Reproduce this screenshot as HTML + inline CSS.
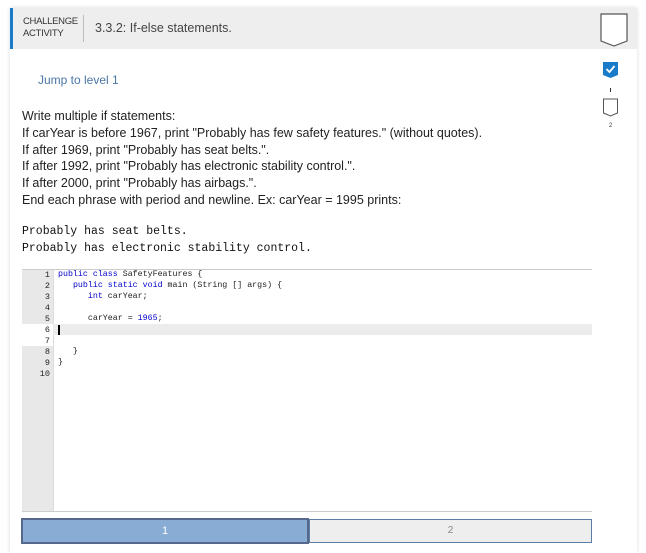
<!DOCTYPE html>
<html><head><style>
body{margin:0;width:646px;height:549px;background:#fff;font-family:"Liberation Sans",sans-serif;position:relative;overflow:hidden}
.card{position:absolute;left:10px;top:8px;width:627px;height:545px;background:#fff;box-shadow:0 0 4px rgba(0,0,0,.15)}
.hdr{position:absolute;left:0;top:0;width:627px;height:41px;background:#eee;border-left:3px solid #1a7bc9;box-sizing:border-box}
.ca{position:absolute;left:10px;top:8px;font-size:9.5px;line-height:12px;color:#333;letter-spacing:-.3px}
.sep{position:absolute;left:70px;top:7px;width:1px;height:27px;background:#bbb}
.title{position:absolute;left:82px;top:13px;font-size:12.5px;color:#444}
.jump{position:absolute;left:38px;top:73px;font-size:12px;color:#4a76a8}
.txt{position:absolute;left:22px;top:108px;font-size:12.5px;line-height:16.8px;color:#222}
.out{position:absolute;left:22px;top:223px;font-family:"Liberation Mono",monospace;font-size:11.5px;line-height:17px;color:#111;margin:0}
.ed{position:absolute;left:22px;top:269px;width:570px;height:241px;border-top:1px solid #ccc;border-bottom:1px solid #ccc}
.gut{position:absolute;left:0;top:0;width:31px;height:241px;background:#e8e8e8;border-right:1px solid #ddd}
.ln{position:absolute;left:0;width:28px;text-align:right;font-family:"Liberation Mono",monospace;font-size:8.5px;color:#222}
.cl{position:absolute;left:36px;font-family:"Liberation Mono",monospace;font-size:8.3px;color:#222;white-space:pre}
.k{color:#00c}.n{color:#00c}
.bar{position:absolute;top:518px;height:26px;box-sizing:border-box;font-size:10px;text-align:center;line-height:22px}
</style></head><body>
<div class="card">
<div class="hdr"><div class="ca">CHALLENGE<br>ACTIVITY</div><div class="sep"></div><div class="title">3.3.2: If-else statements.</div></div>
<svg style="position:absolute;left:590px;top:5px" width="28" height="34"><path d="M1 1H27V28L14 33L1 28Z" fill="#fff" stroke="#555" stroke-width="1.2"/></svg>
<svg style="position:absolute;left:592px;top:53px" width="18" height="80"><path d="M1 1H16V14L8.5 17L1 14Z" fill="#1a7bc9"/><path d="M4.5 8L7.5 11L12.5 5" fill="none" stroke="#fff" stroke-width="1.8"/><line x1="8.5" y1="27" x2="8.5" y2="31" stroke="#333"/><path d="M1.5 38H15.5V52L8.5 55L1.5 52Z" fill="#fff" stroke="#555"/><text x="8.5" y="66" font-size="6" text-anchor="middle" fill="#333">2</text></svg>
</div>
<div class="jump">Jump to level 1</div>
<div class="txt">Write multiple if statements:<br>If carYear is before 1967, print "Probably has few safety features." (without quotes).<br>If after 1969, print "Probably has seat belts.".<br>If after 1992, print "Probably has electronic stability control.".<br>If after 2000, print "Probably has airbags.".<br>End each phrase with period and newline. Ex: carYear = 1995 prints:</div>
<pre class="out">Probably has seat belts.
Probably has electronic stability control.</pre>
<div class="ed"><div class="gut"></div>
<div style="position:absolute;left:0;top:54px;width:570px;height:11px;background:#ececec"></div>
<div style="position:absolute;left:0;top:54px;width:31px;height:22px;background:#fff"></div>
<div class="ln" style="top:0">1</div><div class="ln" style="top:11px">2</div><div class="ln" style="top:22px">3</div><div class="ln" style="top:33px">4</div><div class="ln" style="top:44px">5</div><div class="ln" style="top:55px">6</div><div class="ln" style="top:66px">7</div><div class="ln" style="top:77px">8</div><div class="ln" style="top:88px">9</div><div class="ln" style="top:99px">10</div>
<div class="cl" style="top:0"><span class="k">public class</span> SafetyFeatures {</div>
<div class="cl" style="top:11px">   <span class="k">public static void</span> main (String [] args) {</div>
<div class="cl" style="top:22px">      <span class="k">int</span> carYear;</div>
<div class="cl" style="top:44px">      carYear = <span class="n">1965</span>;</div>
<div style="position:absolute;left:36px;top:55px;width:2px;height:10px;background:#000"></div>
<div class="cl" style="top:77px">   }</div>
<div class="cl" style="top:88px">}</div>
</div>
<div class="bar" style="left:21px;width:288px;background:#88acd3;border:2px solid #56698c;color:#fff;font-size:11px">1</div>
<div class="bar" style="left:309px;top:519px;height:24px;width:283px;background:#eee;border:1px solid #5a7ea6;color:#888">2</div>
</body></html>
